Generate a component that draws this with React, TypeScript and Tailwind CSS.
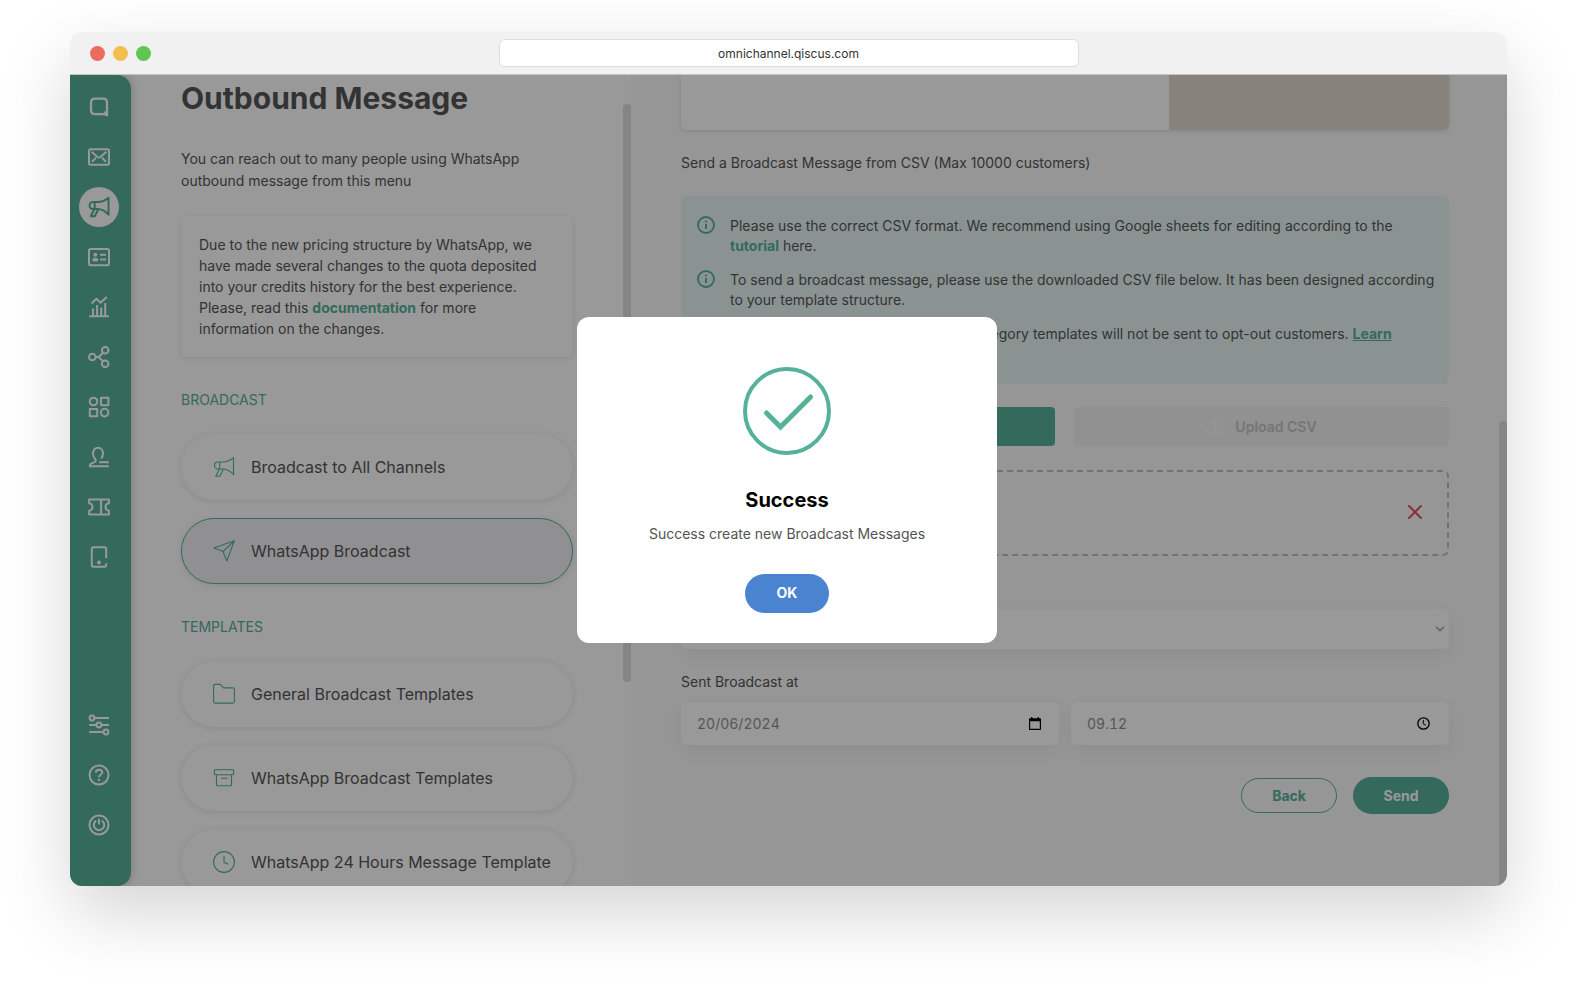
import React, { useState } from "react";

type IconProps = { children: React.ReactNode; size?: string; stroke?: number };

function Icon({ children, size = "size-[22px]", stroke = 2 }: IconProps) {
  return (
    <svg
      viewBox="0 0 22 22"
      className={`${size} shrink-0`}
      fill="none"
      stroke="currentColor"
      strokeWidth={stroke}
      strokeLinejoin="round"
      aria-hidden="true"
    >
      {children}
    </svg>
  );
}

const megaphone = (
  <>
    <path d="M5 6h4.500c4.400 0 7.900-1.500 11-4.300v17c-3.100-3.800-6.600-5.700-11-5.700H5a3.500 3.500 0 0 1 0-7Z" />
    <path d="M6.700 6v7M6.300 13.300 2.800 20.300h3.900l3.700-7.100" />
  </>
);

const mainNav = [
  {
    label: "Home",
    icon: (
      <>
        <path d="M7 2.700h8c2.800 0 4 1.200 4 4v12.600l-2.200-1.200H7c-2.800 0-4-1.200-4-4V6.700c0-2.800 1.200-4 4-4Z" strokeWidth="2.300" />
        <path d="m16 15.500 3 3.500" strokeWidth="1.800" />
      </>
    ),
  },
  {
    label: "Inbox",
    icon: (
      <>
        <rect x="1" y="3.200" width="20" height="15.600" rx="1.500" />
        <path d="m3.600 5.800 6 5.200c.9.700 1.900.7 2.800 0l6-5.200M4 15.700l4-4M18 15.700l-4-4" />
      </>
    ),
  },
  { label: "Outbound message", icon: megaphone, active: true },
  {
    label: "Contacts",
    icon: (
      <>
        <rect x="1" y="3" width="20" height="16.200" rx="1.600" />
        <circle cx="7.300" cy="8.700" r="2" fill="currentColor" stroke="none" />
        <ellipse cx="7.300" cy="13.700" rx="3" ry="1.900" fill="currentColor" stroke="none" />
        <path d="M12 8.700h6M12 13.500h6" />
      </>
    ),
  },
  {
    label: "Analytics",
    icon: (
      <>
        <path d="M1.200 20.300h19.600M5 20v-7.500M9.100 20V9M13.200 20v-8.500M17.200 20V7" />
        <path d="m3.500 7.500 5-4.700 4 4L18.800 1" />
      </>
    ),
  },
  {
    label: "Integrations",
    icon: (
      <>
        <circle cx="4.300" cy="11" r="3.300" />
        <circle cx="17.200" cy="4.200" r="3.300" />
        <circle cx="17.200" cy="17.800" r="3.300" />
        <path d="M7.600 11h3.200l4.200-4.300M10.800 11l4.200 4.400" />
      </>
    ),
  },
  {
    label: "Apps",
    icon: (
      <>
        <circle cx="5.500" cy="5.500" r="3.800" />
        <rect x="13" y="1.800" width="7.400" height="7.400" />
        <rect x="1.800" y="12.900" width="7.400" height="7.400" />
        <circle cx="16.600" cy="16.600" r="3.800" />
      </>
    ),
  },
  {
    label: "Agents",
    icon: (
      <path d="M20.800 16.200h-9.500M20.800 20.200H1.900v-.9c0-2.500 5.100-2.200 5.800-4.300.3-1-.4-1.700-1.200-2.900A7.400 7.400 0 0 1 5 7.600C5 4 7 1.800 9.900 1.800s5.100 2.200 5.100 5.700c0 1.900-.7 3.800-1.900 5" />
    ),
  },
  {
    label: "Tickets",
    icon: (
      <path d="M1.100 3.600h19.800v3.700c-2 .3-3.400 1.800-3.400 3.700s1.400 3.400 3.400 3.700v3.700H1.100v-3.700c2-.3 3.400-1.800 3.400-3.700S3.100 7.600 1.100 7.300Zm12 0v14.800" />
    ),
  },
  {
    label: "Devices",
    icon: (
      <>
        <path d="M18.200 12.300V2.900c0-1-.7-1.700-1.700-1.700h-11c-1 0-1.700.7-1.700 1.700v16.200c0 1 .7 1.700 1.700 1.700h11c1 0 1.700-.7 1.700-1.700v-1.800" />
        <circle cx="11" cy="16.500" r="1.900" fill="currentColor" stroke="none" />
      </>
    ),
  },
];

const footerNav = [
  {
    label: "Settings",
    icon: (
      <>
        <circle cx="4" cy="4" r="2.400" />
        <circle cx="11" cy="11" r="2.400" />
        <circle cx="18" cy="18" r="2.400" />
        <path d="M6.500 4H21M1.200 11h7.300M13.500 11H21M1.200 18h14.300" />
      </>
    ),
  },
  {
    label: "Help",
    icon: (
      <>
        <circle cx="11" cy="11" r="9.500" />
        <path d="M7.900 8.700c0-1.800 1.300-2.900 3.100-2.900s3.200 1.100 3.200 2.700c0 2.300-3.200 2.300-3.200 4.700" />
        <circle cx="11" cy="16" r="1.200" fill="currentColor" stroke="none" />
      </>
    ),
  },
  {
    label: "Log out",
    icon: (
      <>
        <circle cx="11" cy="11" r="9.500" />
        <path d="M8.200 6.600a5.200 5.200 0 1 0 5.600 0M11 4.800v5.800" strokeWidth="2" />
      </>
    ),
  },
];

const broadcastLinks = [
  { label: "Broadcast to All Channels", icon: megaphone, active: false },
  {
    label: "WhatsApp Broadcast",
    icon: <path d="M21.300.8 1 8l9 3.500L13.800 21ZM10 11.500 21.300.8" />,
    active: true,
  },
];

const templateLinks = [
  {
    label: "General Broadcast Templates",
    icon: <path d="M.6 3c0-1 .6-1.600 1.600-1.600h5.200l3.100 3.500h9.300c1 0 1.600.6 1.600 1.600v12c0 1-.6 1.600-1.600 1.600H2.200c-1 0-1.600-.6-1.600-1.600Z" />,
  },
  {
    label: "WhatsApp Broadcast Templates",
    icon: (
      <>
        <rect x="1.400" y="2.700" width="19.200" height="5" rx=".8" />
        <path d="M3.500 7.700v10.100c0 .6.400 1 1 1h13c.6 0 1-.4 1-1V7.700M8 11.200h6.500" />
      </>
    ),
  },
  {
    label: "WhatsApp 24 Hours Message Template",
    icon: (
      <>
        <circle cx="11" cy="11" r="10.400" />
        <path d="M11 5v6.300l4.200 1.900" />
      </>
    ),
  },
];

function NavItem({ label, icon, active }: { label: string; icon: React.ReactNode; active?: boolean }) {
  return (
    <a href="#" aria-label={label} className="flex h-[50px] items-center justify-center">
      <span
        className={
          active
            ? "flex size-10 items-center justify-center rounded-full bg-white text-[#55b199]"
            : "flex size-10 items-center justify-center text-white"
        }
      >
        <Icon>{icon}</Icon>
      </span>
    </a>
  );
}

function PillLink({ label, icon, active }: { label: string; icon: React.ReactNode; active?: boolean }) {
  return (
    <a
      href="#"
      className={`flex h-[66px] shrink-0 items-center gap-4 rounded-full border pl-[31px] text-base whitespace-nowrap shadow-[0_1px_6px_rgba(0,0,0,0.1)] ${
        active ? "border-[#55b199] bg-[#f0f0f3]" : "border-[#fdfdfd] bg-white"
      }`}
    >
      <span className="text-[#55b199]">
        <Icon stroke={1.1}>{icon}</Icon>
      </span>
      {label}
    </a>
  );
}

function Info({ children }: { children: React.ReactNode }) {
  return (
    <li className="flex min-h-10 gap-[15px]">
      <svg viewBox="0 0 18 18" className="size-[18px] shrink-0 text-[#55b199]" fill="none" stroke="currentColor" aria-hidden="true">
        <circle cx="9" cy="9" r="8" strokeWidth="1.800" />
        <circle cx="9" cy="5.600" r="1.100" fill="currentColor" stroke="none" />
        <path d="M9 8v5" strokeWidth="1.900" />
      </svg>
      <p>{children}</p>
    </li>
  );
}

export default function App() {
  const [open, setOpen] = useState(true);
  return (
    <div className="flex h-screen flex-col bg-white px-[70px] pt-8 pb-[109px] font-['Inter','Liberation_Sans',sans-serif] text-sm text-[#555]">
      <div className="flex min-h-0 flex-1 flex-col overflow-hidden rounded-xl shadow-[0_28px_70px_rgba(0,0,0,0.17)]">
        <header className="grid h-[43px] shrink-0 grid-cols-[1fr_580px_1fr] items-center border-b border-[#c4c4c4] bg-[#f1f1f1]">
          <div className="flex gap-2 pl-5">
            <span className="size-[15px] rounded-full bg-[#ed6a5e]" />
            <span className="size-[15px] rounded-full bg-[#f4be4f]" />
            <span className="size-[15px] rounded-full bg-[#61c554]" />
          </div>
          <input
            aria-label="Address"
            defaultValue="omnichannel.qiscus.com"
            className="h-7 w-full rounded-md border border-[#dcdcdc] bg-white text-center text-xs text-[#333]"
          />
        </header>

        <div className="relative flex min-h-0 flex-1 overflow-hidden bg-[#fafafa]">
          <nav aria-label="Main" className="z-10 flex w-[61px] shrink-0 flex-col justify-between rounded-r-[14px] bg-[#55b199] pt-[7px] pr-[3px] pb-9 shadow-[2px_0_8px_rgba(0,0,0,0.14)]">
            <div>
              {mainNav.map((item) => (
                <NavItem key={item.label} {...item} />
              ))}
            </div>
            <div>
              {footerNav.map((item) => (
                <NavItem key={item.label} {...item} />
              ))}
            </div>
          </nav>

          <section className="relative flex w-[500px] shrink-0 flex-col overflow-hidden bg-white pt-[5px] pr-[58px] pl-[50px]">
            <h1 className="text-[30px] leading-9 font-bold">Outbound Message</h1>
            <p className="mt-8 leading-[22px]">
              You can reach out to many people using WhatsApp outbound message from this menu
            </p>
            <div className="mt-6 rounded-md bg-white p-[18px] leading-[21px] shadow-[0_1px_5px_rgba(0,0,0,0.1)]">
              Due to the new pricing structure by WhatsApp, we have made several changes to the quota deposited into your
              credits history for the best experience. Please, read this{" "}
              <a href="#" className="font-bold text-[#55b199]">documentation</a> for more information on the changes.
            </div>
            <h2 className="mt-8 mb-[23px] leading-[22px] text-[#55b199]">BROADCAST</h2>
            <div className="flex flex-col gap-[18px]">
              {broadcastLinks.map((link) => (
                <PillLink key={link.label} {...link} />
              ))}
            </div>
            <h2 className="mt-8 mb-[23px] leading-[22px] text-[#55b199]">TEMPLATES</h2>
            <div className="flex flex-col gap-[18px]">
              {templateLinks.map((link) => (
                <PillLink key={link.label} {...link} />
              ))}
            </div>
            <span className="absolute top-[29px] right-0 h-[578px] w-2 rounded-full bg-[#dedede]" />
          </section>

          <main className="relative min-w-0 flex-1 overflow-hidden pr-[58px] pl-[50px]">
            <div className="flex h-[55px] overflow-hidden rounded-b-md bg-white shadow-[0_1px_5px_rgba(0,0,0,0.12)]">
              <div className="flex-1" />
              <div className="w-[280px] bg-[#e3d9d1]" />
            </div>
            <h2 className="mt-[23px] leading-5">Send a Broadcast Message from CSV (Max 10000 customers)</h2>
            <ul className="mt-[23px] flex flex-col gap-3.5 rounded-md bg-[#e6f6f3] py-5 pr-3.5 pl-4 leading-5">
              <Info>
                Please use the correct CSV format. We recommend using Google sheets for editing according to the{" "}
                <a href="#" className="font-bold text-[#55b199]">tutorial</a> here.
              </Info>
              <Info>
                To send a broadcast message, please use the downloaded CSV file below. It has been designed according to
                your template structure.
              </Info>
              <Info>
                Please take note that any marketing category templates will not be sent to opt-out customers.{" "}
                <a href="#" className="font-bold text-[#55b199] underline">
                  Learn
                  <br />
                  more
                </a>
              </Info>
            </ul>
            <div className="mt-[23px] grid grid-cols-2 gap-5">
              <button type="button" className="h-[39px] rounded bg-[#55b199] font-semibold text-white">
                Download CSV
              </button>
              <button type="button" className="flex h-[39px] items-center justify-center gap-3 rounded bg-[#f2f2f2] font-semibold text-[#c4c4c4]">
                <svg viewBox="0 0 16 16" className="size-4 text-white" fill="none" stroke="currentColor" aria-hidden="true">
                  <path d="M1 10v4c0 .6.400 1 1 1h12c.6 0 1-.4 1-1v-4M8 12V1M4.500 4.500 8 1l3.500 3.500" strokeLinejoin="round" />
                </svg>
                Upload CSV
              </button>
            </div>
            <div className="mt-6 flex h-[86px] items-center justify-end rounded-md border-2 border-dashed border-[#c0c0c0] pr-[25px] pb-0.5">
              <button type="button" aria-label="Remove file" className="text-[#dd5050]">
                <svg viewBox="0 0 14 14" className="block size-3.5" fill="none" stroke="currentColor" strokeWidth="1.900" strokeLinecap="round" aria-hidden="true">
                  <path d="m1 1 12 12M13 1 1 13" />
                </svg>
              </button>
            </div>
            <div className="relative mt-[53px]">
              <select aria-label="Channel" className="block h-10 w-full appearance-none rounded-md bg-white px-4 shadow-[0_6px_16px_rgba(0,0,0,0.06)]">
                <option></option>
              </select>
              <svg viewBox="0 0 10 6" className="pointer-events-none absolute top-[17px] right-1 h-1.5 w-2.5 text-[#888]" fill="none" stroke="currentColor" strokeWidth="1.200" aria-hidden="true">
                <path d="m1 .6 4 4 4-4" />
              </svg>
            </div>
            <h2 className="mt-[23px] leading-5">Sent Broadcast at</h2>
            <div className="mt-2.5 grid grid-cols-2 gap-3">
              <div className="flex h-[43px] items-center rounded-md bg-white pr-[18px] pl-4 text-[#909090] shadow-[0_6px_16px_rgba(0,0,0,0.06)]">
                <input aria-label="Date" defaultValue="20/06/2024" className="min-w-0 flex-1 tabular-nums" />
                <svg viewBox="0 0 12 13" className="h-[13px] w-3 text-black" fill="currentColor" aria-hidden="true">
                  <path fillRule="evenodd" d="M2 0h1.400v1.300h5.200V0H10v1.300h1c.6 0 1 .4 1 1V12c0 .6-.4 1-1 1H1c-.6 0-1-.4-1-1V2.300c0-.6.400-1 1-1h1ZM1.200 4.300v7.500h9.600V4.300Z" />
                </svg>
              </div>
              <div className="flex h-[43px] items-center rounded-md bg-white pr-[19px] pl-4 text-[#909090] shadow-[0_6px_16px_rgba(0,0,0,0.06)]">
                <input aria-label="Time" defaultValue="09.12" className="min-w-0 flex-1 tabular-nums" />
                <svg viewBox="0 0 13 13" className="size-[13px] text-black" fill="none" stroke="currentColor" strokeWidth="1.300" aria-hidden="true">
                  <circle cx="6.500" cy="6.500" r="5.700" />
                  <path d="M6.300 3v3.800l2.600 1.600" strokeWidth="1" />
                </svg>
              </div>
            </div>
            <div className="mt-8 flex items-center justify-end gap-4 font-bold">
              <button type="button" className="h-[35px] w-24 rounded-full border border-[#55b199] text-[#55b199]">Back</button>
              <button type="button" className="h-[37px] w-24 rounded-full bg-[#55b199] text-white">Send</button>
            </div>
            <span className="absolute top-[346px] right-0 bottom-0 w-2 rounded-t-full bg-[#dedede]" />
          </main>

          {open && (
            <div className="absolute inset-0 z-20 flex items-center justify-center bg-black/40 pr-[3px] pb-0.5">
              <div role="dialog" aria-modal="true" aria-labelledby="dialog-title" className="flex w-[420px] flex-col items-center rounded-xl bg-white pt-[50px] pb-[30px]">
                <svg viewBox="0 0 88 88" className="size-[88px] text-[#55b199]" fill="none" stroke="currentColor" aria-hidden="true">
                  <circle cx="44" cy="44" r="42" strokeWidth="4" />
                  <path d="M23.500 46 37.500 60 67.500 30" strokeWidth="5" strokeLinecap="round" />
                </svg>
                <h2 id="dialog-title" className="mt-[31px] text-xl leading-7 font-bold text-black">Success</h2>
                <p className="mt-2.5 leading-5 text-[#545454]">Success create new Broadcast Messages</p>
                <button type="button" onClick={() => setOpen(false)} className="mt-[30px] h-[39px] w-[84px] rounded-full bg-[#4a83d0] font-bold text-white">
                  OK
                </button>
              </div>
            </div>
          )}
        </div>
      </div>
    </div>
  );
}
